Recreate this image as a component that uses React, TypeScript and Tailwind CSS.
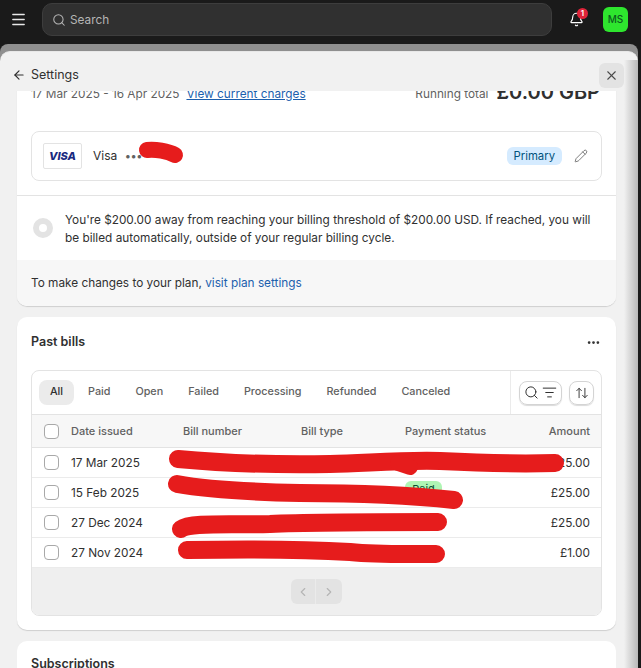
import { ArrowLeft, Bell, ChevronLeft, ChevronRight, Menu, Pencil, Search, X, MoreHorizontal, ListFilter, ArrowUpDown } from "lucide-react";

const F = { fontFamily: "Inter, 'Liberation Sans', sans-serif" };
const tabs = ["Paid", "Open", "Failed", "Processing", "Refunded", "Canceled"];
const rows = [
  { date: "17 Mar 2025", amount: "£25.00", paid: false },
  { date: "15 Feb 2025", amount: "£25.00", paid: true },
  { date: "27 Dec 2024", amount: "£25.00", paid: false },
  { date: "27 Nov 2024", amount: "£1.00", paid: false },
];

function Check() {
  return <span className="block w-[15px] h-[15px] rounded-[4px] border border-[#a8a8a8] bg-white shrink-0" />;
}

export default function App() {
  return (
    <div style={F} className="relative w-[641px] h-[668px] overflow-hidden bg-[#1a1a1a] text-[11.8px] text-[#303030]">
      <header className="h-[44px] flex items-start">
        <div className="w-[37px] h-[38px] flex items-center justify-center shrink-0">
          <Menu size={17} strokeWidth={2} className="text-[#e8e8e8]" />
        </div>
        <div className="ml-[5px] mt-[3px] w-[510px] h-[33px] rounded-[10px] bg-[#303030] border border-[#3d3d3d] flex items-center pl-[9px] gap-[4px] text-[#b5b5b5]">
          <Search size={14} strokeWidth={1.8} />
          <span className="mt-[2px]">Search</span>
        </div>
        <div className="relative ml-[17px] w-[16px] h-[38px] flex items-center">
          <Bell size={15} strokeWidth={1.8} className="text-white" />
          <span className="absolute left-[8px] top-[8px] w-[11px] h-[11px] rounded-full bg-[#e0243a] text-white text-[8px] leading-[11px] text-center font-semibold">1</span>
        </div>
        <div className="ml-[18px] mt-[7px] w-[25px] h-[25px] rounded-[6px] bg-[#2ee62e] text-[#0d5c1e] text-[10px] font-medium flex items-center justify-center">MS</div>
      </header>

      <div className="relative h-[624px] w-[638px] bg-[#8f8f8f] rounded-t-[8px] pt-[7px]">
        <div className="h-[617px] rounded-t-[10px] bg-[#f1f1f1] flex flex-col overflow-hidden border-t border-[#e8e8e8]">
          <div className="h-[39px] shrink-0 flex items-center pl-[12px] pr-[14px] pt-[7px]">
            <ArrowLeft size={14} strokeWidth={2} className="text-[#303030]" />
            <span className="ml-[5px] text-[12.5px]">Settings</span>
            <button className="ml-auto w-[25px] h-[25px] rounded-[6px] bg-[#e3e3e3] flex items-center justify-center">
              <X size={15} strokeWidth={1.7} className="text-[#4a4a4a]" />
            </button>
          </div>

          <div className="flex-1 overflow-hidden pl-[17px] pr-[22px]">
            <section className="-mt-[8px] bg-white rounded-b-[10px] shadow-[0_1px_1px_rgba(0,0,0,0.14)]">
              <div className="h-[21px] px-[14px] flex items-center justify-between pt-[2px]">
                <div className="flex gap-[7px] text-[#616161]">
                  <span>17 Mar 2025 - 16 Apr 2025</span>
                  <span className="text-[#1c5fad] underline">View current charges</span>
                </div>
                <div className="flex items-center gap-[8px] mr-[2px]">
                  <span className="text-[#616161]">Running total</span>
                  <span className="text-[20px] font-semibold text-[#303030] -mt-[6px]">£0.00 GBP</span>
                </div>
              </div>

              <div className="mx-[14px] mt-[27px] h-[50px] rounded-[8px] border border-[#e3e3e3] flex items-center pl-[11px] pr-[13px]">
                <div className="w-[39px] h-[26px] rounded-[2px] border border-[#e3e3e3] flex items-center justify-center text-[#1a2a80] text-[11px] font-extrabold italic">VISA</div>
                <span className="ml-[11px] text-[12px]">Visa</span>
                <span className="ml-[8px] text-[#616161] text-[11px] tracking-[0.5px] font-bold leading-none">•••</span>
                <span className="ml-auto rounded-[6px] bg-[#d5ebff] text-[#00527c] text-[11.3px] leading-[18px] px-[7px]">Primary</span>
                <Pencil size={14} strokeWidth={1.4} className="ml-[12px] text-[#616161]" />
              </div>

              <div className="mt-[14px] border-t border-[#e3e3e3] h-[65px] pl-[16px] pr-[14px] flex items-center">
                <span className="block w-[20px] h-[20px] rounded-full border-[6px] border-[#e3e3e3] bg-white shrink-0" />
                <p className="ml-[12px] mt-[2px] leading-[18px]">You're $200.00 away from reaching your billing threshold of $200.00 USD. If reached, you will be billed automatically, outside of your regular billing cycle.</p>
              </div>

              <div className="h-[46px] bg-[#f7f7f7] rounded-b-[10px] px-[14px] pt-[2px] flex items-center">
                <span>To make changes to your plan,&nbsp;</span>
                <span className="text-[#1c5fad]">visit plan settings</span>
              </div>
            </section>

            <section className="mt-[11px] h-[313px] bg-white rounded-[10px] shadow-[0_1px_1px_rgba(0,0,0,0.14)] px-[14px] pt-[13px]">
              <div className="h-[25px] mb-[15px] flex items-center justify-between">
                <h2 className="font-semibold text-[12.5px]">Past bills</h2>
                <MoreHorizontal size={15} strokeWidth={2.4} className="text-[#303030] mr-[1px]" />
              </div>

              <div className="rounded-[8px] border border-[#e3e3e3] overflow-hidden h-[246px] flex flex-col text-[11px]">
                <div className="h-[44px] shrink-0 flex border-b border-[#e3e3e3] font-medium text-[#616161]">
                  <div className="flex-1 flex items-center pl-[7px] text-[10.8px]">
                    <span className="w-[35px] h-[25px] rounded-[8px] bg-[#ebebeb] text-[#303030] flex items-center justify-center mr-[14px]">All</span>
                    <div className="flex gap-[25px]">
                      {tabs.map((t) => (
                        <span key={t}>{t}</span>
                      ))}
                    </div>
                  </div>
                  <div className="w-[91px] border-l border-[#ebebeb] flex items-center pl-[8px] gap-[7px]">
                    <span className="w-[43px] h-[24px] rounded-[8px] border border-[#d4d4d4] shadow-[0_1px_1px_rgba(0,0,0,0.15)] flex items-center justify-center gap-[3px] text-[#303030]">
                      <Search size={15} strokeWidth={1.6} />
                      <ListFilter size={15} strokeWidth={1.6} />
                    </span>
                    <span className="w-[25px] h-[24px] rounded-[8px] border border-[#d4d4d4] shadow-[0_1px_1px_rgba(0,0,0,0.15)] flex items-center justify-center text-[#303030]">
                      <ArrowUpDown size={14} strokeWidth={1.6} />
                    </span>
                  </div>
                </div>

                <div className="h-[33px] shrink-0 bg-[#f7f7f7] border-b border-[#e3e3e3] flex items-center pl-[12px] pr-[11px] font-medium text-[#616161]">
                  <Check />
                  <span className="ml-[12px] w-[112px]">Date issued</span>
                  <span className="w-[118px]">Bill number</span>
                  <span className="w-[104px]">Bill type</span>
                  <span>Payment status</span>
                  <span className="ml-auto">Amount</span>
                </div>

                {rows.map((r) => (
                  <div key={r.date} className="h-[30px] shrink-0 bg-white border-b border-[#ebebeb] flex items-center pl-[12px] pr-[11px] text-[11.8px]">
                    <Check />
                    <span className="ml-[12px] mt-[2px]">{r.date}</span>
                    {r.paid && <span className="ml-[266px] -mt-[8px] rounded-[6px] bg-[#aff5b4] text-[#0c5132] text-[11px] px-[7px] leading-[16px]">Paid</span>}
                    <span className="ml-auto mt-[2px]">{r.amount}</span>
                  </div>
                ))}

                <div className="flex-1 bg-[#efefef] flex items-center justify-center">
                  <div className="flex h-[25px] rounded-[6px] overflow-hidden bg-[#e3e3e3] text-[#b5b5b5]">
                    <span className="w-[25px] flex items-center justify-center border-r border-[#ebebeb]"><ChevronLeft size={14} /></span>
                    <span className="w-[26px] flex items-center justify-center"><ChevronRight size={14} /></span>
                  </div>
                </div>
              </div>
            </section>

            <section className="mt-[11px] h-[60px] bg-white rounded-[10px] px-[14px] pt-[14px]">
              <h2 className="font-semibold text-[12.5px]">Subscriptions</h2>
            </section>
          </div>
        </div>
        <div className="absolute top-[16px] right-0 bottom-0 w-[14px] bg-gradient-to-r from-[#f1f1f1] to-[#b8b8b8]" />
      </div>

      <svg className="absolute left-0 top-0 pointer-events-none" width="641" height="668" fill="none" stroke="#e61c1c" strokeLinecap="round" strokeLinejoin="round">
        <path d="M147 150 C155 149 168 151 175 155" strokeWidth="16" />
        <path d="M178 459 C220 463 270 465 330 464 C370 463 400 460 440 461 C480 463 520 464 555 463" strokeWidth="18" />
        <path d="M398 463 L410 467" strokeWidth="16" />
        <path d="M177 484 C210 490 250 492 300 493 C350 493 400 494 454 500" strokeWidth="18" />
        <path d="M181 529 C190 522 230 525 270 524 C310 522 380 522 438 522" strokeWidth="18" />
        <path d="M187 550 C240 549 300 549 350 552 C380 555 410 554 436 554" strokeWidth="18" />
      </svg>
    </div>
  );
}
